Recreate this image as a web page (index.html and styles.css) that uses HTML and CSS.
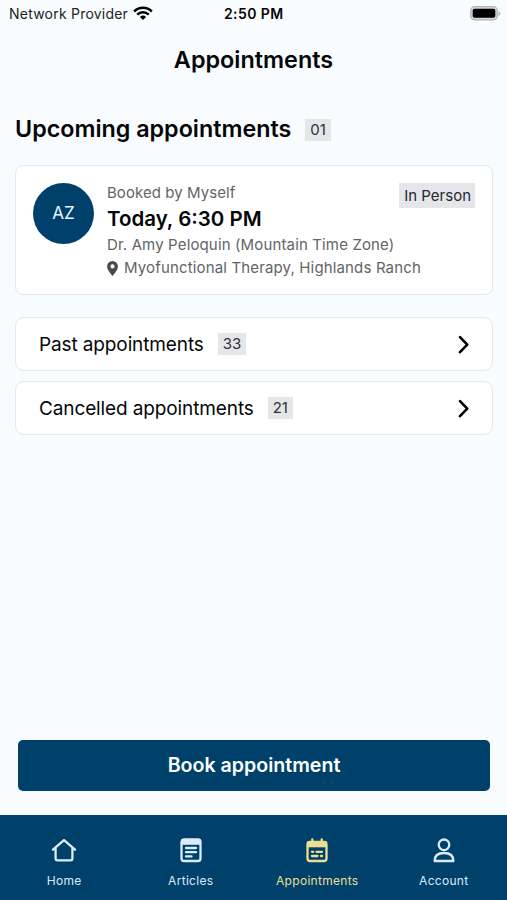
FILE: index.html
```html
<!DOCTYPE html>
<html lang="en">
<head>
<meta charset="utf-8">
<title>Appointments</title>
<link rel="stylesheet" href="styles.css">
</head>
<body>
<div class="status">
  <span class="carrier">Network Provider</span>
  <svg class="wifi" width="20" height="15" viewBox="0 0 20 15" fill="none" stroke="#000" stroke-width="2.5"><path d="M1.2 5.5a12.4 12.4 0 0 1 17.600 0M4.200 8.700a8.200 8.200 0 0 1 11.600 0"/><path d="M10 14 6.900 10.900a4.400 4.400 0 0 1 6.200 0z" fill="#000" stroke="none"/></svg>
  <span class="time">2:50 PM</span>
  <svg class="battery" width="31" height="15" viewBox="0 0 31 15"><rect x=".7" y=".7" width="26.600" height="13.200" rx="4" fill="#d3d7d5" stroke="#b4b8b6" stroke-width="1.300"/><rect x="2.700" y="2.800" width="22.600" height="9" rx="1.800"/><path d="M28.500 5v5q2-1 2-2.500t-2-2.500z" fill="#b4b8b6"/></svg>
</div>
<h1 class="title">Appointments</h1>
<main class="content">
  <div class="heading"><h2 class="heading-text">Upcoming appointments</h2><span class="count">01</span></div>
  <article class="card">
    <div class="avatar">AZ</div>
    <div class="details">
      <p class="line booked">Booked by Myself</p>
      <p class="when">Today, 6:30 PM</p>
      <p class="line doctor">Dr. Amy Peloquin (Mountain Time Zone)</p>
      <p class="line place"><svg class="pin" width="11" height="15" viewBox="0 0 11 15"><path fill="#48494b" fill-rule="evenodd" d="M5.500 0A5.400 5.400 0 0 0 .1 5.400C.1 8.800 3.100 11.700 5.500 15c2.400-3.300 5.400-6.200 5.400-9.600A5.400 5.400 0 0 0 5.500 0zm0 3.300a2.100 2.100 0 1 1 0 4.200 2.100 2.100 0 0 1 0-4.200z"/></svg><span>Myofunctional Therapy, Highlands Ranch</span></p>
    </div>
    <span class="mode">In Person</span>
  </article>
  <div class="row"><span class="row-text">Past appointments</span><span class="count">33</span><svg class="chevron" width="12" height="18" viewBox="0 0 12 18"><path d="M2 2.200 9.300 9.700 2 17.200"/></svg></div>
  <div class="row"><span class="row-text">Cancelled appointments</span><span class="count">21</span><svg class="chevron" width="12" height="18" viewBox="0 0 12 18"><path d="M2 2.200 9.300 9.700 2 17.200"/></svg></div>
</main>
<button class="book">Book appointment</button>
<nav class="tabs">
  <a class="tab"><svg class="icon" viewBox="0 0 26 26"><path d="M2 12.700 13 3.200l11 9.500M4.600 11.500v10a1.800 1.800 0 0 0 1.800 1.800h13.200a1.800 1.800 0 0 0 1.800-1.800v-10"/></svg><span>Home</span></a>
  <a class="tab"><svg class="icon" viewBox="0 0 26 26"><rect x="3.500" y="2.500" width="19" height="21.500" rx="2.500"/><path class="solid" d="M3 2.500h20v5.300H3z"/><path d="M8 11h10M8 15.200h10M8 19.400h5.500"/></svg><span>Articles</span></a>
  <a class="tab active"><svg class="icon" viewBox="0 0 26 26"><rect x="3.500" y="5" width="19" height="19" rx="2.500"/><path class="solid" d="M3 4.500h20v5.800H3z"/><path d="M8.300 2.300v3M17.700 2.300v3M8 14.800h1.200M12.500 14.800H18M8 19h5.500M17 19h1"/></svg><span>Appointments</span></a>
  <a class="tab"><svg class="icon" viewBox="0 0 26 26"><circle cx="13" cy="7.800" r="5.300"/><path d="M3.600 24c0-5.300 3.500-8 9.400-8s9.400 2.700 9.400 8z"/></svg><span>Account</span></a>
</nav>
</body>
</html>
```
FILE: styles.css
```css
* { box-sizing: border-box; }
body {
  margin: 0;
  height: 900px;
  display: flex;
  flex-direction: column;
  background: #f9fcff;
  color: #050607;
  font-family: Inter, "Liberation Sans", sans-serif;
}
h1, h2, p { margin: 0; }
.status {
  display: grid;
  grid-template-columns: 124px 91px 1fr auto;
  align-items: center;
  height: 27px;
  padding: 0 6px 0 9px;
  font-size: 14px;
}
.carrier { white-space: nowrap; color: #222; letter-spacing: .22px; }
.time { font-weight: 600; letter-spacing: .4px; }
.title { height: 65px; line-height: 66px; text-align: center; font-size: 23.400px; font-weight: 600; }
.content { padding: 24px 14px 0 15px; }
.heading { display: flex; align-items: center; gap: 14px; height: 27px; margin-bottom: 22px; }
.heading-text { font-size: 23.300px; font-weight: 600; white-space: nowrap; line-height: 27px; padding-bottom: 2px; }
.count {
  height: 22px;
  line-height: 22px;
  padding: 0 5px;
  background: #e4e6ea;
  color: #303237;
  font-size: 15px;
}
.card {
  display: flex;
  align-items: flex-start;
  height: 130px;
  padding: 17px;
  margin-bottom: 22px;
  border: 1px solid #e2e8ed;
  border-radius: 8px;
  background: #fff;
}
.avatar {
  flex: none;
  width: 61px;
  height: 61px;
  border-radius: 50%;
  background: #00416b;
  color: #eff6fb;
  font-size: 17px;
  line-height: 61px;
  text-align: center;
}
.details { flex: 1; min-width: 0; padding-left: 13px; white-space: nowrap; }
.line { height: 23px; line-height: 20px; color: #626466; font-size: 15px; letter-spacing: .14px; }
.booked { letter-spacing: .06px; }
.when { height: 29px; line-height: 26px; font-size: 20.500px; font-weight: 600; }
.place { display: flex; align-items: center; gap: 6px; height: 20px; letter-spacing: .15px; }
.pin { flex: none; }
.mode { flex: none; height: 25px; padding: 0 4px 0 5px; line-height: 25px; background: #e4e6ea; color: #25282d; font-size: 15px; white-space: nowrap; }
.row {
  display: flex;
  align-items: center;
  gap: 14px;
  height: 54px;
  padding: 0 22px 0 23px;
  margin-bottom: 10px;
  border: 1px solid #e2e8ed;
  border-radius: 9px;
  background: #fff;
}
.row-text { font-size: 19px; letter-spacing: -.12px; white-space: nowrap; }
.chevron { margin-left: auto; overflow: visible; fill: none; stroke: #000; stroke-width: 2.6; stroke-linecap: round; stroke-linejoin: round; }
.book {
  height: 51px;
  margin: auto 17px 24px 18px;
  padding: 0 0 2px;
  border: 0;
  border-radius: 5px;
  background: #00416b;
  color: #fff;
  font: 600 19.600px Inter, sans-serif;
}
.tabs { display: grid; grid-template-columns: repeat(4, 1fr); height: 85px; padding-left: 1px; background: #00416b; }
.tab { display: flex; flex-direction: column; align-items: center; padding-top: 22px; gap: 9px; color: #dbebf7; font-size: 12px; line-height: 18px; letter-spacing: .3px; }
.active { color: #eddf91; }
.icon { width: 26px; height: 26px; fill: none; stroke: currentColor; stroke-width: 2.3; stroke-linecap: round; stroke-linejoin: round; }
.solid { fill: currentColor; stroke: none; }
```
